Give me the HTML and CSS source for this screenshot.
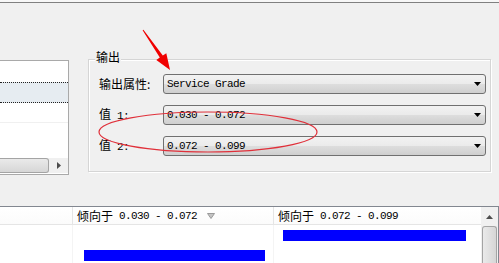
FILE: index.html
```html
<!DOCTYPE html>
<html>
<head>
<meta charset="utf-8">
<link rel="stylesheet" href="styles.css">
</head>
<body>
<div class="topbar"></div>
<div class="upper">
  <div class="listbox">
    <div class="lb-row"></div>
    <div class="lb-row sel"></div>
    <div class="lb-row last"></div>
    <div class="lb-fill"></div>
    <div class="hscroll">
      <div class="hthumb"></div>
      <div class="harrow"><svg width="4" height="7" viewBox="0 0 4 7"><polygon points="0,0 4,3.5 0,7" fill="#4d4d4d"/></svg></div>
    </div>
  </div>
  <div class="group">
    <div class="cjk caption">输出</div>
    <div class="frow">
      <span class="flabel cjk">输出属性:</span>
      <div class="combo"><span class="mono">Service Grade</span><svg class="drop" width="7" height="4" viewBox="0 0 7 4"><polygon points="0,0 7,0 3.5,4" fill="#000"/></svg></div>
    </div>
    <div class="frow">
      <span class="flabel"><span class="cjk">值</span><span class="mono"> 1:</span></span>
      <div class="combo"><span class="mono">0.030 - 0.072</span><svg class="drop" width="7" height="4" viewBox="0 0 7 4"><polygon points="0,0 7,0 3.5,4" fill="#000"/></svg></div>
    </div>
    <div class="frow">
      <span class="flabel"><span class="cjk">值</span><span class="mono"> 2:</span></span>
      <div class="combo"><span class="mono">0.072 - 0.099</span><svg class="drop" width="7" height="4" viewBox="0 0 7 4"><polygon points="0,0 7,0 3.5,4" fill="#000"/></svg></div>
    </div>
  </div>
</div>
<div class="listview">
  <div class="lv-main">
    <div class="lv-header">
      <div class="cell c0"></div>
      <div class="cell c1"><span class="cjk">倾向于</span><span class="mono"> 0.030 - 0.072</span><svg class="sort" width="8" height="6" viewBox="0 0 8 6"><polygon points="0.5,0.5 7.5,0.5 4,5.5" fill="#c4c4c4" stroke="#9a9a9a" stroke-width="1"/></svg></div>
      <div class="cell c2"><span class="cjk">倾向于</span><span class="mono"> 0.072 - 0.099</span></div>
    </div>
    <div class="lv-row">
      <div class="cell c0"></div>
      <div class="cell c1"></div>
      <div class="cell c2"><div class="bar bar2" style="width:183px"></div></div>
    </div>
    <div class="lv-row">
      <div class="cell c0"></div>
      <div class="cell c1"><div class="bar bar1" style="width:181px"></div></div>
      <div class="cell c2"></div>
    </div>
  </div>
  <div class="vscroll">
    <div class="varrow"><svg width="7" height="4" viewBox="0 0 7 4"><polygon points="3.5,0 7,4 0,4" fill="#4d4d4d"/></svg></div>
    <div class="vthumb"></div>
  </div>
</div>
<svg class="annot" width="499" height="263" viewBox="0 0 499 263">
  <polygon points="143.4,29.7 162.8,55.6 166.3,53.3 170,70 156.3,59.9 159.8,57.6 142.6,30.3" fill="#f00000"/>
  <ellipse cx="208" cy="132" rx="109" ry="20" fill="none" stroke="#e0303a" stroke-width="1.2"/>
</svg>
</body>
</html>
```
FILE: styles.css
```css
html, body {
  margin: 0;
  padding: 0;
}
body {
  width: 499px;
  height: 263px;
  overflow: hidden;
  background: #f0f0f0;
  position: relative;
  color: #000;
}
.cjk {
  font-family: "Noto Sans CJK SC", sans-serif;
  font-size: 12px;
}
.mono {
  font-family: "Liberation Mono", monospace;
  font-size: 11px;
  letter-spacing: -0.6px;
}
.topbar {
  height: 2px;
  background: #f7f7f7;
  border-bottom: 1px solid #808080;
}
.upper {
  height: 203px;
  display: flex;
  align-items: flex-start;
}
.listbox {
  margin-top: 57px;
  width: 68px;
  height: 113px;
  border: 1px solid #a9a9a9;
  border-left: none;
  background: #fff;
  display: flex;
  flex-direction: column;
}
.lb-row {
  height: 21px;
  box-sizing: border-box;
}
.lb-row.sel {
  height: 21px;
  background: #e6ecf1;
  border-top: 1px dotted #222;
  border-bottom: 1px dotted #222;
}
.lb-row.last {
  height: 20px;
  border-bottom: 1px solid #f0f0f0;
}
.lb-fill {
  flex: 1;
}
.hscroll {
  height: 15px;
  margin-bottom: 1px;
  display: flex;
  background: #f0f0f0;
}
.hthumb {
  width: 49px;
  box-sizing: border-box;
  border: 1px solid #a4a4a4;
  border-left: none;
  border-radius: 0 3px 3px 0;
  background: linear-gradient(#eaeaea, #d6d6d6);
}
.harrow {
  flex: 1;
  display: flex;
  align-items: center;
  justify-content: center;
}
.group {
  margin: 56px 0 0 19px;
  width: 403px;
  box-sizing: border-box;
  padding: 14px 4px 15px 10px;
  border: 1px solid #d5d5d5;
  box-shadow: inset 1px 1px 0 #fff, 1px 1px 0 #fff;
  display: flex;
  flex-direction: column;
  gap: 11px;
}
.caption {
  align-self: flex-start;
  margin: -24px 0 -1px -4px;
  padding: 0 1px;
  line-height: 14px;
  background: #f0f0f0;
}
.frow {
  display: flex;
  align-items: center;
  height: 20px;
}
.flabel {
  width: 64px;
  flex: none;
  white-space: pre;
  line-height: 16px;
}
.combo {
  flex: 1;
  height: 20px;
  box-sizing: border-box;
  border: 1px solid #707070;
  border-radius: 3px;
  background: linear-gradient(#f2f2f2 0%, #ebebeb 48%, #dddddd 52%, #cfcfcf 100%);
  display: flex;
  align-items: center;
  padding: 0 4px 0 3px;
  white-space: pre;
}
.combo .mono {
  flex: 1;
}
.drop {
  flex: none;
}
.listview {
  display: flex;
  width: 498px;
  height: 57px;
  border-top: 1px solid #828790;
  border-right: 1px solid #828790;
  background: #fff;
}
.lv-main {
  flex: 1;
  display: flex;
  flex-direction: column;
}
.lv-header {
  height: 19px;
  display: flex;
  border-bottom: 1px solid #e5e5e5;
  background: linear-gradient(#ffffff, #fbfbfb);
}
.lv-row {
  height: 21px;
  display: flex;
}
.cell {
  box-sizing: border-box;
  display: flex;
  align-items: center;
  white-space: pre;
}
.c0 {
  width: 73px;
  border-right: 1px solid #e5e5e5;
}
.c1 {
  width: 201px;
  border-right: 1px solid #e5e5e5;
  padding-left: 4px;
}
.c2 {
  flex: 1;
  padding-left: 4px;
}
.lv-row .c0, .lv-row .c1 {
  border-right-color: #f4f4f4;
}
.lv-row .cell {
  align-items: flex-start;
}
.sort {
  margin-left: 10px;
}
.bar {
  height: 11px;
  margin-top: 5px;
  background: #0000ff;
}
.bar1 {
  margin-left: 7px;
}
.bar2 {
  margin-left: 5px;
}
.vscroll {
  width: 17px;
  flex: none;
  background: #f0f0f0;
  display: flex;
  flex-direction: column;
}
.varrow {
  height: 19px;
  display: flex;
  align-items: center;
  justify-content: center;
}
.vthumb {
  flex: 1;
  margin: 0 1px;
  border: 1px solid #a4a4a4;
  border-bottom: none;
  border-radius: 3px 3px 0 0;
  background: linear-gradient(90deg, #eaeaea, #d6d6d6);
}
.annot {
  position: absolute;
  left: 0;
  top: 0;
  pointer-events: none;
}
```
